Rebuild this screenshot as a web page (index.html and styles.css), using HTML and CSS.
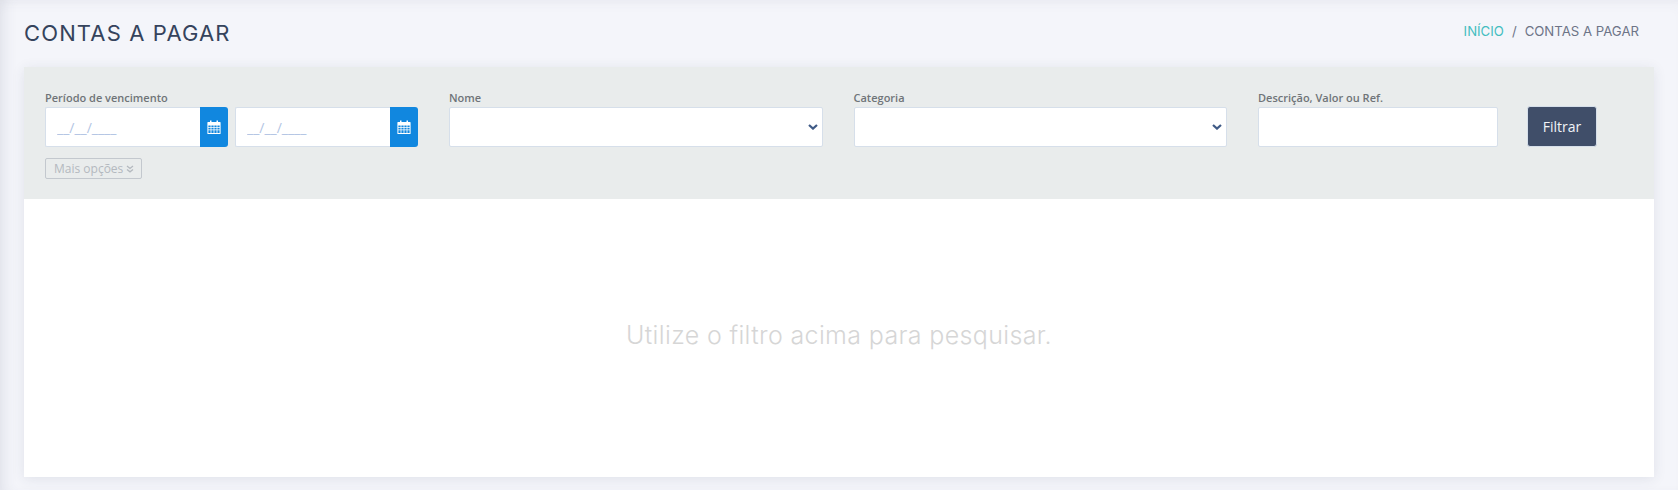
FILE: index.html
```html
<!DOCTYPE html>
<html lang="pt-BR">
<head>
  <meta charset="UTF-8">
  <title>Contas a pagar</title>
  <link rel="stylesheet" href="styles.css">
</head>
<body>

  <div class="page-header">
    <h1>CONTAS A PAGAR</h1>
    <div class="breadcrumb">
      <a href="#">INÍCIO</a>
      <span class="sep">/</span>
      <span>CONTAS A PAGAR</span>
    </div>
  </div>

  <div class="card">
    <div class="filter">
      <div class="filter-row">
        <div class="field field-date">
          <label>Período de vencimento</label>
          <div class="date-pair">
            <div class="date-input">
              <input type="text" placeholder="__/__/____">
              <button class="date-btn">
                <svg viewBox="0 0 14 14" width="14" height="14"><use href="#cal"></use></svg>
              </button>
            </div>
            <div class="date-input">
              <input type="text" placeholder="__/__/____">
              <button class="date-btn">
                <svg viewBox="0 0 14 14" width="14" height="14"><use href="#cal"></use></svg>
              </button>
            </div>
          </div>
        </div>

        <div class="field field-select">
          <label>Nome</label>
          <div class="select-wrap">
            <select></select>
            <svg class="chevron" viewBox="0 0 10 6" width="10" height="6"><path d="M1 1l4 3.6L9 1"></path></svg>
          </div>
        </div>

        <div class="field field-select">
          <label>Categoria</label>
          <div class="select-wrap">
            <select></select>
            <svg class="chevron" viewBox="0 0 10 6" width="10" height="6"><path d="M1 1l4 3.6L9 1"></path></svg>
          </div>
        </div>

        <div class="field field-text">
          <label>Descrição, Valor ou Ref.</label>
          <input type="text">
        </div>

        <button class="btn-filter">Filtrar</button>
      </div>

      <button class="btn-more">Mais opções
        <svg viewBox="0 0 8 8" width="8" height="8"><path d="M1 1l3 2.4L7 1M1 4.4l3 2.4 3-2.4"></path></svg>
      </button>
    </div>

    <div class="empty">Utilize o filtro acima para pesquisar.</div>
  </div>

  <svg class="defs" width="0" height="0">
    <symbol id="cal" viewBox="0 0 14 14">
      <path fill="#fff" fill-rule="evenodd" d="M3 0.5h1.5v1.5h5V0.5H11V2h2a0.6 0.6 0 0 1 .6.6v10.8a0.6 0.6 0 0 1-.6.6H1a0.6 0.6 0 0 1-.6-.6V2.6A0.6 0.6 0 0 1 1 2h2zM1.4 5.4v1.6h2.2V5.4zm3 0v1.6h2.2V5.4zm3 0v1.6h2.2V5.4zm3 0v1.6h2.2V5.4zM1.4 7.8v1.6h2.2V7.8zm3 0v1.6h2.2V7.8zm3 0v1.6h2.2V7.8zm3 0v1.6h2.2V7.8zM1.4 10.2V13h2.2v-2.8zm3 0V13h2.2v-2.8zm3 0V13h2.2v-2.8zm3 0V13h2.2v-2.8z"></path>
    </symbol>
  </svg>

</body>
</html>
```

FILE: styles.css
```css
* {
  box-sizing: border-box;
}
html, body {
  height: 100%;
}
body {
  margin: 0;
  padding: 0 24px 13px 24px;
  overflow: hidden;
  background: #f4f5fa;
  box-shadow: inset 12px 0 14px -8px rgba(60,70,100,0.10), inset 0 10px 14px -8px rgba(60,70,100,0.06);
  font-family: 'Open Sans', sans-serif;
}
.defs {
  display: block;
}
.page-header {
  height: 67px;
  display: flex;
  justify-content: space-between;
  align-items: center;
  padding-bottom: 2px;
}
.page-header h1 {
  margin: 0;
  font-family: 'Inter', sans-serif;
  font-size: 22px;
  font-weight: 400;
  letter-spacing: 1.13px;
  color: #35435c;
}
.breadcrumb {
  font-family: 'Inter', sans-serif;
  font-size: 13.2px;
  color: #6d7487;
  padding-right: 15px;
  padding-bottom: 4px;
  display: flex;
  gap: 8px;
}
.breadcrumb a {
  color: #43bdc0;
  text-decoration: none;
}
.card {
  height: 410px;
  background: white;
  box-shadow: 0 2px 12px rgba(50,60,90,0.10);
  display: flex;
  flex-direction: column;
}
.filter {
  height: 132px;
  background-color: #e9ecec;
  padding: 22px 21px 0;
}
.filter-row {
  display: flex;
  gap: 31px;
}
.field label {
  display: block;
  height: 18px;
  font-size: 11px;
  font-weight: 600;
  line-height: 18px;
  color: #6f7478;
}
.field input, .field select {
  display: block;
  width: 100%;
  height: 40px;
  background: white;
  border: 1px solid #d6dfea;
  border-radius: 2px;
  outline: none;
}
.field-date {
  width: 373px;
}
.date-pair {
  display: flex;
  gap: 7px;
}
.date-input {
  flex: 1;
  display: flex;
}
.field .date-input input {
  flex: 1;
  min-width: 0;
  border-right: none;
  border-radius: 2px 0 0 2px;
  padding: 0 11px;
  font-family: 'Open Sans', sans-serif;
  font-size: 14px;
}
.date-input input::placeholder {
  color: #b3c5e4;
  opacity: 1;
}
.date-btn {
  width: 28px;
  padding: 0;
  border: none;
  border-radius: 0 3px 3px 0;
  background-color: #1187df;
  display: flex;
  align-items: center;
  justify-content: center;
}
.field-select {
  width: 373.5px;
}
.select-wrap {
  position: relative;
}
.select-wrap select {
  appearance: none;
}
.chevron {
  position: absolute;
  right: 5px;
  top: 17px;
}
.chevron path {
  fill: none;
  stroke: #3f5a86;
  stroke-width: 2.2;
}
.field-text {
  width: 240px;
}
.btn-filter {
  width: 70px;
  height: 41px;
  margin-top: 17px;
  margin-left: -2px;
  border: 1px solid #d6dfea;
  border-radius: 3px;
  background-color: #404e69;
  color: #f2f4f7;
  font-family: 'Open Sans', sans-serif;
  font-size: 14px;
}
.btn-more {
  display: flex;
  align-items: center;
  gap: 3px;
  height: 21px;
  margin-top: 11px;
  padding: 0 7px 0 8px;
  border: 1px solid #c3c8ce;
  border-radius: 2px;
  background: transparent;
  color: #b4b9bf;
  font-family: 'Open Sans', sans-serif;
  font-size: 12px;
}
.btn-more path {
  fill: none;
  stroke: #b4b9bf;
  stroke-width: 1.3;
}
.empty {
  flex: 1;
  display: flex;
  align-items: center;
  justify-content: center;
  padding-bottom: 7px;
  font-family: 'Inter', sans-serif;
  font-size: 25px;
  font-weight: 300;
  letter-spacing: 0.35px;
  color: #d6d6d6;
}
```
